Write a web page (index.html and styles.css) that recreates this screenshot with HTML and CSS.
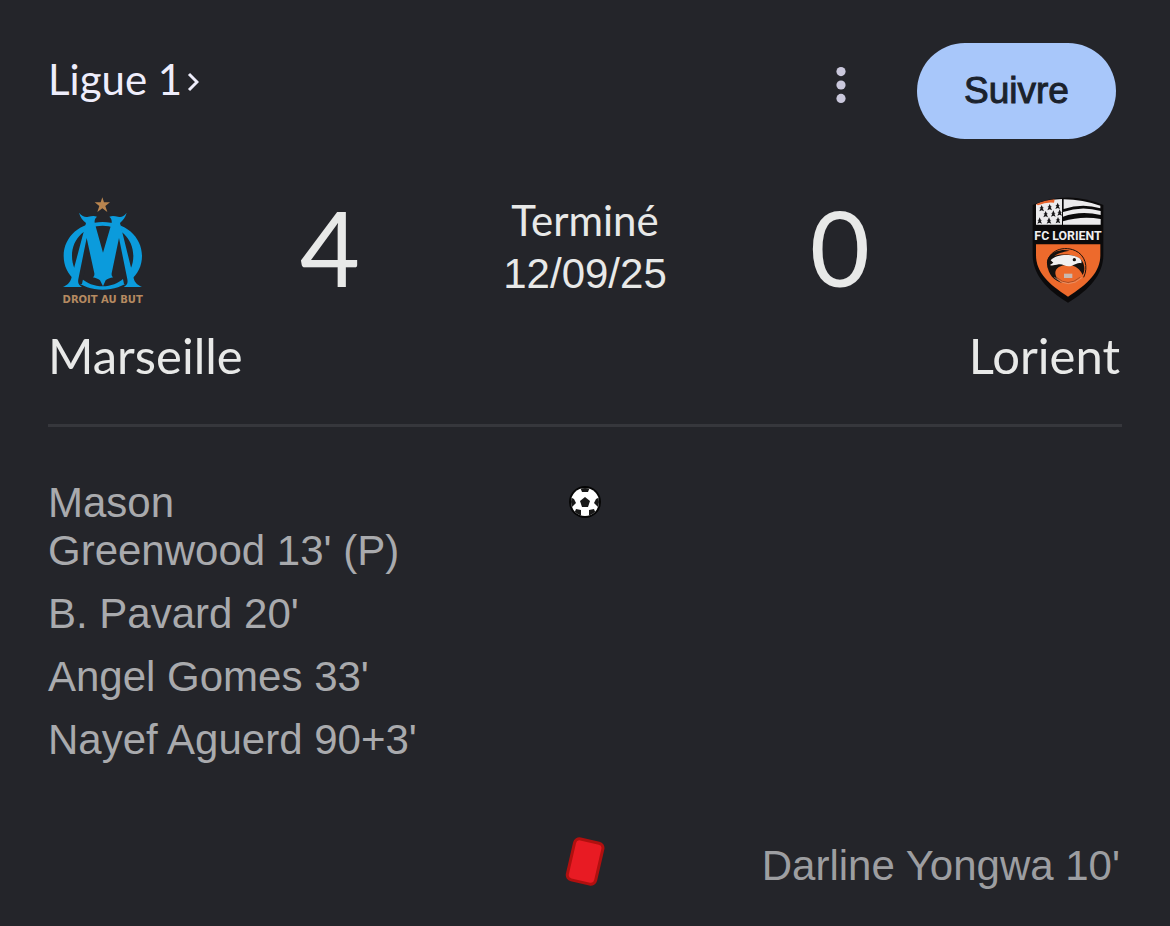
FILE: index.html
```html
<!DOCTYPE html>
<html lang="fr">
<head>
<meta charset="utf-8">
<meta name="viewport" content="width=device-width, initial-scale=1">
<title>Marseille – Lorient</title>
<link rel="stylesheet" href="styles.css">
</head>
<body>
<main class="match">
  <header class="topbar">
    <a class="league" href="#ligue1">Ligue 1<svg class="chevron" viewBox="0 0 12 20" aria-hidden="true"><path d="M2 2l8 8-8 8"/></svg></a>
    <button class="more" type="button" aria-label="Plus d'options"><svg viewBox="0 0 10 36" aria-hidden="true"><circle cx="5" cy="4.600" r="4.600"/><circle cx="5" cy="18" r="4.600"/><circle cx="5" cy="31.400" r="4.600"/></svg></button>
    <button class="follow" type="button">Suivre</button>
  </header>

  <section class="scoreboard">
    <svg class="crest crest-om" viewBox="57 21 255 321" role="img" aria-label="Marseille">
      <path class="star" d="M184 22l5 15 18 0-14 11 6 18-15-11-15 11 6-18-14-11 18 0z"/>
      <path class="om-ring" fill-rule="evenodd" d="M185 96c66 0 118 43 118 102s-52 101-118 101S68 257 68 198 119 96 185 96zm0 11c-49 0-92 36-92 91s43 91 92 91 92-36 92-91-43-91-92-91z"/>
      <path class="om-gap" d="M137 98l-45 184h31l29-138 25 126 9 18 9-18 26-126 28 138h31L235 98l-49 104z"/>
      <path class="om-m" d="M114 68c10 12 19 14 28 12 10-2 18-3 26 0-6 5-9 12-6 22l24 86 25-86c3-10 0-17-6-22 8-3 16-2 26 0 10 2 17 0 26-12-4 14-10 22-20 31l41 166c3 13 11 20 25 26h-55c11-6 13-12 11-23l-25-124-22 106c-1 7 2 10 5 12-10 2-18 5-23 9l-8 18-9-18c-5-4-13-7-22-9 3-2 6-5 5-12l-23-106-25 124c-2 11 1 17 11 23H66c14-6 21-13 25-26l44-166c-10-8-17-17-21-31z"/>
      <text class="om-motto" x="185" y="338">DROIT AU BUT</text>
    </svg>
    <p class="score">4</p>
    <div class="status"><span>Terminé</span><time datetime="2025-09-12">12/09/25</time></div>
    <p class="score">0</p>
    <svg class="crest crest-fcl" viewBox="66 21 216 318" role="img" aria-label="Lorient">
      <path d="M68 45Q174 0 280 45v150c0 58-42 105-106 143C110 300 68 253 68 195z" fill="#0b0a0b"/>
      <path d="M78 43q38-14 78-16v77H78z" fill="#ecebed"/>
      <path d="M78 43q25-12 56-15l-2 10q-23-3-48 8z" fill="#e9642b"/>
      <g fill="#151416">
        <path id="er" d="M95 45l3 7 4 2-4 1 4 9-7-3-7 3 4-9-4-1 4-2z"/>
        <use href="#er" x="24" y="-3"/><use href="#er" x="48" y="-7"/>
        <use href="#er" x="12" y="18"/><use href="#er" x="35" y="16"/>
        <use href="#er" x="-6" y="37"/><use href="#er" x="22" y="37"/><use href="#er" x="49" y="36"/>
        <use href="#er" x="54" y="13"/>
      </g>
      <path d="M161 28q58 1 110 19v8q-54-16-110 2z" fill="#ecebed"/>
      <path d="M159 66q56-20 113-3v12q-60-14-113 5z" fill="#ecebed"/>
      <path d="M159 94q55-17 113-7v17H159z" fill="#ecebed"/>
      <text class="fcl-name" x="174" y="149">FC LORIENT</text>
      <path d="M78 163h193v33c0 50-38 87-97 124C115 283 78 246 78 196z" fill="#ed6a2c"/>
      <path d="M115 235c-13-46 39-72 81-53 29 13 40 48 25 80" fill="none" stroke="#18100d" stroke-width="3"/>
      <path d="M112 225c-9-29 31-51 67-43-23 4-38 9-46 16 26-8 61-5 79 10 13 12 14 34 6 47-8-18-22-28-40-30-22-2-43 7-42 25 1 13 10 23 22 29-27-7-43-25-46-54z" fill="#15110f"/>
      <path d="M122 211c14-17 52-19 74-12 16 5 21 14 18 21-8-4-18 3-28 7-18 6-26-6-40-4-12 2-20 6-26 2l10-7z" fill="#f1f0f1"/>
      <circle cx="193" cy="209" r="5" fill="#15110f"/>
      <path d="M162 251h25v13h-25z" fill="#c9b8b0"/>
      <path d="M140 262q33 31 70 0" fill="none" stroke="#a94e27" stroke-width="3"/>
      <path d="M133 262q42 38 84 0" fill="none" stroke="#e6a17e" stroke-width="2"/>
    </svg>
  </section>

  <div class="teams"><h2>Marseille</h2><h2>Lorient</h2></div>

  <section class="events goals">
    <ul class="home">
      <li>Mason<br>Greenwood 13' (P)</li>
      <li>B. Pavard 20'</li>
      <li>Angel Gomes 33'</li>
      <li>Nayef Aguerd 90+3'</li>
    </ul>
    <svg class="ball" viewBox="0 0 34 34" role="img" aria-label="Buts">
      <defs><clipPath id="ball-clip"><circle cx="17" cy="17" r="14"/></clipPath></defs>
      <circle cx="17" cy="17" r="16" fill="#060606"/>
      <circle cx="17" cy="17" r="14" fill="#fff"/>
      <g fill="#181818" clip-path="url(#ball-clip)">
        <path d="M17 12l5 4-2 6h-6l-2-6z"/>
        <path d="M12 2h10l-2 5-3 0-3 0z"/>
        <path d="M2 12l4 2 2 4-4 4H2z"/>
        <path d="M32 12l-4 2-2 4 4 4h2z"/>
        <path d="M6 29l2-5 5 1 0 6z"/>
        <path d="M28 29l-2-5-5 1 0 6z"/>
      </g>
    </svg>
    <ul class="away"></ul>
  </section>

  <section class="events cards">
    <ul class="home"></ul>
    <svg class="card" viewBox="0 0 40 50" role="img" aria-label="Carton rouge"><rect x="5.500" y="3.500" width="29" height="42" rx="5" transform="rotate(13 20 25)"/></svg>
    <ul class="away"><li>Darline Yongwa 10'</li></ul>
  </section>
</main>
</body>
</html>
```
FILE: styles.css
```css
* { box-sizing: border-box; }
body {
  margin: 0;
  background: #24252a;
  color: #e8e9e8;
  font-family: Lato, "Open Sans", sans-serif;
}
h2, p, ul { margin: 0; padding: 0; font-weight: 400; list-style: none; }
button { border: 0; padding: 0; background: none; color: inherit; cursor: pointer; }

.match { padding: 43px 48px 32px; }

.topbar { display: flex; align-items: flex-start; padding-right: 6px; }
.league {
  display: flex;
  align-items: center;
  gap: 5px;
  margin-right: auto;
  padding-top: 8px;
  color: #eeedfb;
  font-size: 42px;
  line-height: 56px;
  text-decoration: none;
}
.chevron {
  width: 12px;
  height: 20px;
  margin-top: 6px;
  fill: none;
  stroke: currentColor;
  stroke-width: 3;
}
.more { display: flex; justify-content: center; width: 48px; margin-right: 52px; padding-top: 24px; }
.more svg { width: 10px; height: 36px; fill: #cac8dc; }
.follow {
  width: 199px;
  height: 96px;
  border-radius: 48px;
  background: #a8c7fa;
  color: #1b222c;
  font: 37px "Liberation Sans", Arial, sans-serif;
  -webkit-text-stroke: 1px #1b222c;
}

.scoreboard {
  display: grid;
  grid-template-columns: 108px 1fr 162px 1fr 108px;
  justify-items: center;
  padding-top: 54px;
}
.crest { margin-top: 4px; overflow: visible; }
.crest-om { width: 85px; height: 107px; }
.crest-fcl { width: 72px; height: 106px; }
.score { font-size: 104px; line-height: 108px; }
.status {
  display: flex;
  flex-direction: column;
  align-items: center;
  font-size: 42px;
  line-height: 54px;
  white-space: nowrap;
}
.status time { font-family: "Liberation Sans", Arial, sans-serif; }
.star { fill: #b9854f; }
.om-ring, .om-m { fill: #0b9bdc; }
.om-gap { fill: #24252a; }
.om-motto {
  fill: #b58a61;
  font: bold 30px "DejaVu Sans", sans-serif;
  text-anchor: middle;
}
.fcl-name {
  fill: #f0eff1;
  font: bold 37px Roboto, sans-serif;
  text-anchor: middle;
}

.teams {
  display: flex;
  justify-content: space-between;
  padding: 23px 2px 41px 0;
  border-bottom: 3px solid #36373c;
}
.teams h2 { font-size: 49px; line-height: 56px; }

.events {
  display: grid;
  grid-template-columns: 1fr 54px 1fr;
  justify-items: center;
  color: #a9aaad;
  font-family: "Liberation Sans", Arial, sans-serif;
  font-size: 42px;
  line-height: 48px;
}
.goals { padding-top: 52px; }
.cards { padding-top: 78px; color: #9d9ea1; }
.home, .away { display: flex; flex-direction: column; gap: 15px; width: 100%; }
.away { padding-right: 2px; text-align: right; }
.ball { width: 34px; height: 34px; margin-top: 6px; }
.card { width: 40px; height: 50px; margin-top: -5px; fill: #e81b23; stroke: #b0100f; stroke-width: 3; }
```
